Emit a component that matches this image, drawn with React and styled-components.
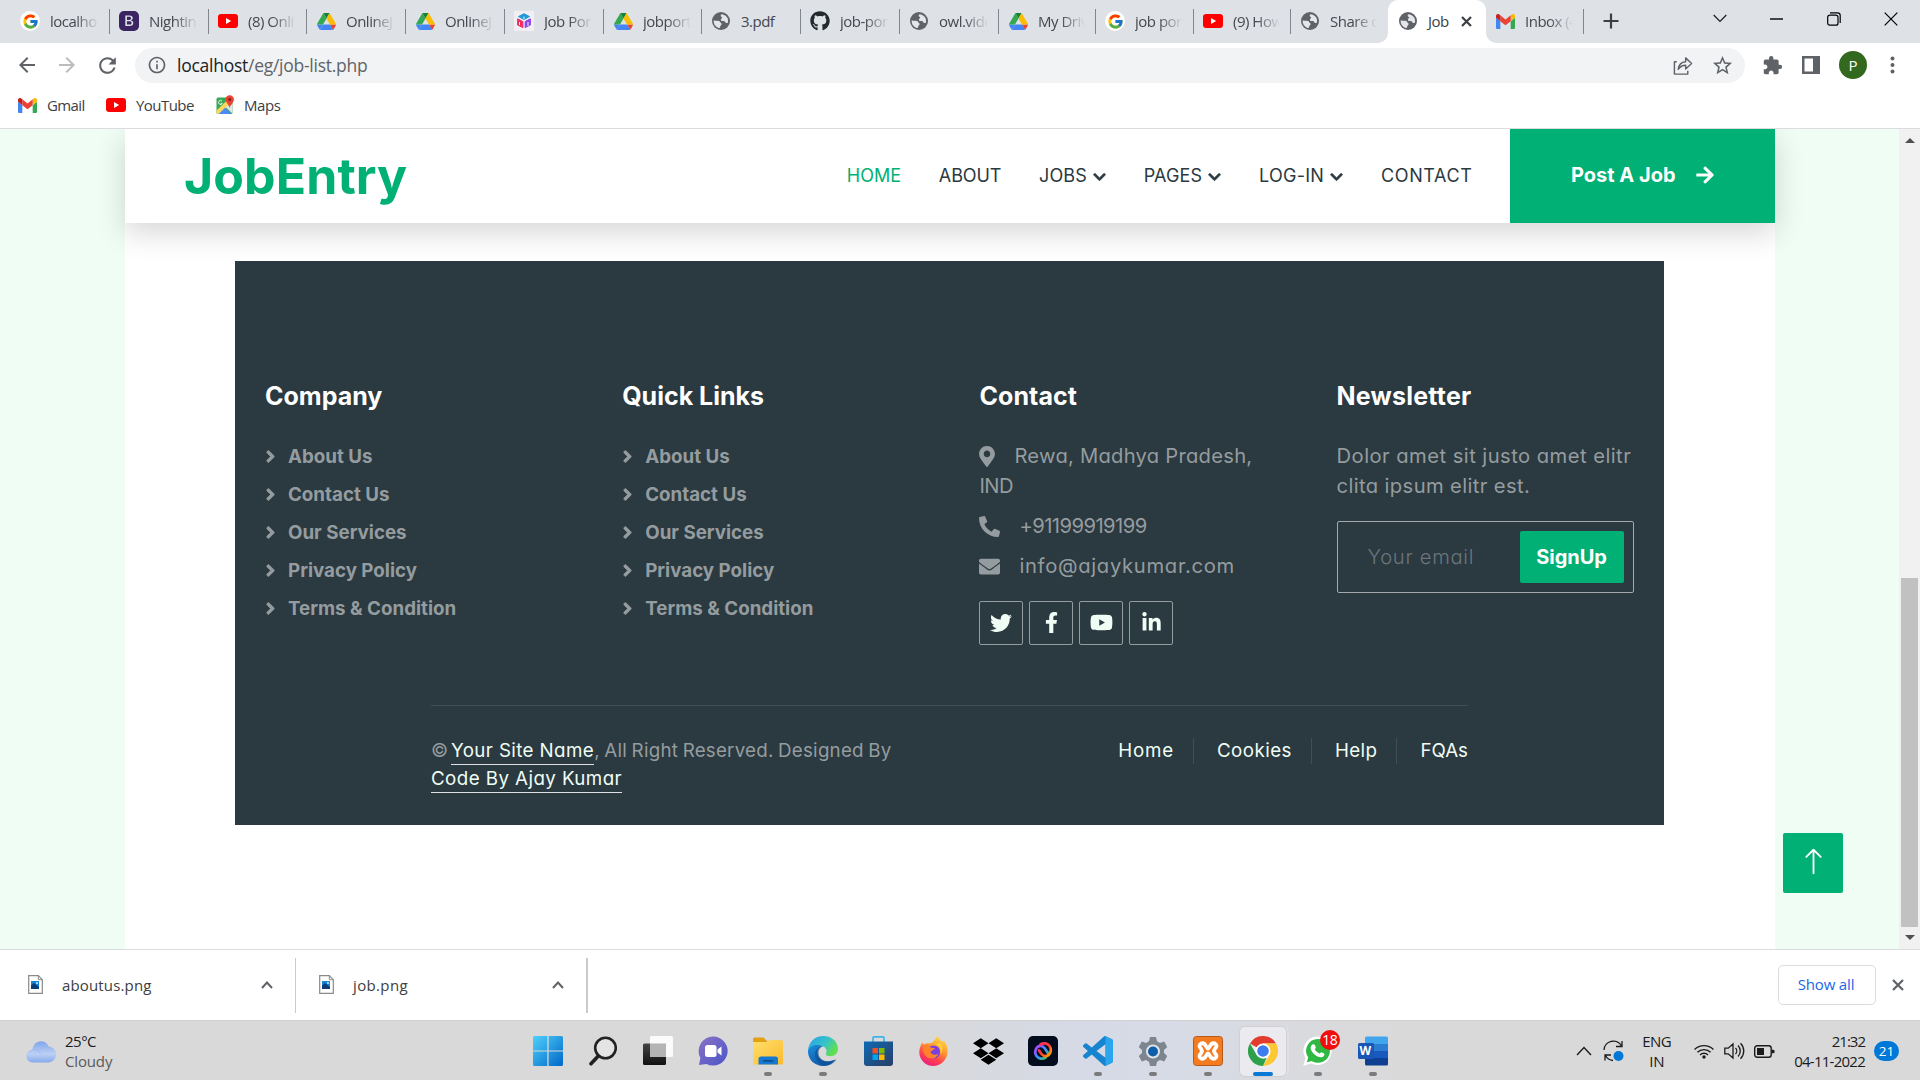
import React from "react";
import styled, { createGlobalStyle, css } from "styled-components";
import {
  FaChevronDown, FaAngleRight, FaMapMarkerAlt, FaPhoneAlt, FaEnvelope, FaTwitter,
  FaFacebookF, FaYoutube, FaLinkedinIn, FaArrowRight, FaGithub, FaDropbox,
} from "react-icons/fa";
import { FcGoogle } from "react-icons/fc";
import { BsArrowUp, BsBootstrapFill } from "react-icons/bs";
import { MdExtension, MdOutlineInfo, MdStarOutline, MdRefresh, MdArrowBack, MdArrowForward } from "react-icons/md";

const GREEN = "#00b074";
const MINT = "#effdf5";
const DARK = "#2b3940";

const GlobalStyle = createGlobalStyle`
  * { box-sizing: border-box; }
  html, body { margin: 0; padding: 0; overflow: hidden; }
  svg { display: block; flex: none; }
`;

const ui = css`font-family: "Open Sans", "Noto Sans", sans-serif;`;
const heading = css`font-family: "Inter", sans-serif; font-weight: 700;`;
const body = css`font-family: "Inter", sans-serif; font-feature-settings: "cv11"; font-weight: 400;`;

const Screen = styled.div`
  width: 1920px; height: 1080px; display: flex; flex-direction: column;
  background: #fff; overflow: hidden; ${ui}
`;
const T = styled.span`
  letter-spacing: ${p => p.$ls || 0}px;
  word-spacing: ${p => p.$ws || 0}px;
  white-space: pre;
`;

/* ---------- browser chrome ---------- */
const TabStrip = styled.div`
  flex: none; height: 43px; background: #dee1e6; display: flex; padding: 0 1px 0 11px;
`;
const Tab = styled.div`
  position: relative; flex: none; width: ${p => p.$w}px; height: 43px; display: flex; align-items: center;
  padding: 0 11px 1px 9px; gap: 10px; font-size: 15px; color: #45484d;
  ${p => p.$active && css`
    background: #fff; border-radius: 10px 10px 0 0; color: #3c4043; padding-left: 10px; padding-right: 14px;
    &::before, &::after {
      content: ""; position: absolute; bottom: 0; width: 10px; height: 10px;
    }
    &::before { left: -10px; background: radial-gradient(circle at 0 0, transparent 9.5px, #fff 10px); }
    &::after { right: -10px; background: radial-gradient(circle at 100% 0, transparent 9.5px, #fff 10px); }
  `}
`;
const TabRule = styled.i`
  position: absolute; right: 0; top: 9px; width: 1px; height: 25px; background: #80868b;
`;
const TabIcon = styled.span`
  flex: none; width: 20px; height: 20px; display: flex; align-items: center; justify-content: center;
`;
const GoogleDisc = styled(TabIcon)`background: #fff; border-radius: 50%;`;
const TabTitle = styled.span`
  flex: 1; min-width: 0; white-space: nowrap; letter-spacing: -0.5px; line-height: 24px;
  ${p => p.$fade && css`mask-image: linear-gradient(90deg, #000 calc(100% - 24px), transparent);`}
`;
const NewTab = styled.div`width: 54px; height: 42px; display: flex; align-items: center; justify-content: center;`;
const WindowControls = styled.div`margin-left: auto; display: flex;`;
const WindowButton = styled.div`
  width: 57px; height: 37px; display: flex; align-items: center; justify-content: center;
`;

const Toolbar = styled.div`
  flex: none; height: 44px; padding: 0 25px 0 15px; display: flex; align-items: center;
`;
const NavIcons = styled.div`display: flex; gap: 16px; width: 120px;`;
const Omnibox = styled.div`
  flex: none; width: 1610px; height: 35px; border-radius: 18px; background: #f1f3f4; display: flex; align-items: center;
  padding: 0 11px 0 12px; color: #5f6368; font-size: 17.5px;
  svg:first-child { margin-right: 10px; }
`;
const Host = styled.span`color: #202124;`;
const OmniActions = styled.div`
  margin-left: auto; display: flex; gap: 18px; align-items: center;
  && svg { margin: 0; }
`;
const Extensions = styled.div`
  margin-left: auto; display: flex; align-items: center; gap: 19px; color: #5f6368;
`;
const Avatar = styled.span`
  width: 28px; height: 28px; border-radius: 50%; background: #33691e; color: #fff; font-size: 15px; margin-right: 4px;
  display: flex; align-items: center; justify-content: center;
`;
const Bookmarks = styled.div`
  flex: none; height: 42px; border-bottom: 1px solid #dadce0; padding: 0 0 5px 18px; display: flex; align-items: center;
  font-size: 15px; color: #3c4043;
`;
const Bookmark = styled.div`
  display: flex; align-items: center; gap: ${p => p.$gap}px; width: ${p => p.$w}px;
`;

/* ---------- page ---------- */
const Viewport = styled.div`
  flex: none; height: 820px; display: flex; background: ${MINT}; overflow: hidden;
`;
const Gutter = styled.div`width: ${p => p.$w}px; flex: none;`;
const RightGutter = styled(Gutter)`padding: 704px 0 0 8px;`;
const Container = styled.main`width: 1650px; flex: none; background: #fff;`;
const Navbar = styled.nav`
  position: relative; height: 94px; background: #fff; display: flex; align-items: center;
  box-shadow: 0 10px 28px rgba(0, 0, 0, 0.16); clip-path: inset(0 -60px -60px -60px);
`;
const Logo = styled.div`
  ${heading} color: ${GREEN}; font-size: 50px; line-height: 60px; letter-spacing: 0.1px; padding: 0 0 0 59px;
`;
const Menu = styled.div`
  ${body} margin-left: auto; display: flex; gap: 37.8px; font-size: 18px; line-height: 28px; padding: 0 37.5px 1px 0; color: ${DARK};
`;
const MenuItem = styled.a`
  display: flex; align-items: center; gap: 6px; color: ${p => (p.$active ? GREEN : DARK)}; font-weight: 440;
  svg { margin-top: 2px; width: 13px; height: 14px; stroke: currentColor; stroke-width: 22px; }
`;
const PostJob = styled.a`
  ${heading} width: 265px; height: 94px; background: ${GREEN}; color: #fff; font-size: 20px;
  display: flex; align-items: center; padding: 0 0 2px 61px; gap: 19px;
`;
const Footer = styled.footer`
  width: 1429px; height: 564px; margin: 38px 0 0 110px; background: ${DARK}; color: #959c9f; padding-top: 120px;
  display: flex; flex-direction: column;
`;
const Columns = styled.div`
  height: 324px; display: grid; grid-template-columns: repeat(4, 357.2px);
`;
const Column = styled.section`padding: 0 30px; display: flex; flex-direction: column;`;
const Title = styled.h5`
  ${heading} margin: 0 0 31px; font-size: 25px; line-height: 30px; color: #fff;
`;
const FooterLink = styled.a`
  ${heading} display: flex; align-items: center; font-size: 18.75px; line-height: 30px; margin-bottom: 8px; gap: 12px;
  svg { width: 11px; height: 19px; margin-bottom: 2px; stroke: currentColor; stroke-width: 14px; }
`;
const Para = styled.p`
  ${body} margin: 0 0 ${p => p.$mb || 10}px; font-size: 20.2px; line-height: 30px;
  ${Title} + & { margin-top: -1px; }
`;
const ContactLine = styled.span`
  display: flex; align-items: center; gap: 19px;
  svg { width: ${p => p.$icon || 21}px; height: 21px; }
`;
const Line = styled.span`display: block;`;
const Socials = styled.div`display: flex; gap: 6px; margin-top: 10px;`;
const SocialButton = styled.a`
  width: 44px; height: 44px; border: 1px solid #959c9f; border-radius: 2px; color: ${MINT};
  display: flex; align-items: center; justify-content: center; padding-bottom: 1px;
`;
const Subscribe = styled.form`
  width: 297px; height: 72px; border: 1px solid #a3a9ac; border-radius: 2px; display: flex; align-items: center;
  justify-content: space-between; padding: 0 9px 0 30px;
`;
const Placeholder = styled.span`${body} font-weight: 300; font-size: 20.2px; color: #6c757d; padding-bottom: 2px;`;
const SignUp = styled.span`
  ${heading} width: 104px; height: 52px; border-radius: 2px; background: ${GREEN}; color: #fff; font-size: 20px;
  display: flex; align-items: center; justify-content: center;
`;
const Legal = styled.div`
  ${body} width: 1037px; margin-left: 196px; border-top: 1px solid #414e54; padding-top: 31px; display: flex;
  justify-content: space-between; font-size: 18.75px; line-height: 28px;
`;
const Copyright = styled.div`display: flex; flex-direction: column; align-items: flex-start;`;
const CopyLine = styled.div`display: flex; height: 28px;`;
const SiteLink = styled.a`color: ${MINT}; height: 28px; border-bottom: 1px solid #dee2e6;`;
const LegalMenu = styled.div`display: flex;`;
const LegalLink = styled.a`
  color: ${MINT}; height: 26px; margin-top: 1px; line-height: 26px; padding-right: ${p => (p.$last ? 0 : 19)}px; margin-right: ${p => (p.$last ? 0 : 23)}px;
  border-right: ${p => (p.$last ? "0" : "1px solid #414e54")};
`;
const BackToTop = styled.a`
  width: 60px; height: 60px; border-radius: 2px; background: ${GREEN}; color: #fff; display: flex;
  align-items: center; justify-content: center; padding: 0 0 4px 0;
`;
const Scrollbar = styled.div`
  width: 21px; margin-left: auto; background: #f1f1f1; display: flex; flex-direction: column; align-items: center;
  padding: 9px 0;
`;
const Thumb = styled.div`width: 17px; height: 349px; margin-top: 435px; background: #c1c1c1;`;
const DownArrow = styled.div`margin-top: auto;`;

/* ---------- downloads ---------- */
const Downloads = styled.div`
  flex: none; height: 72px; border-top: 1px solid #dadce0; border-bottom: 1px solid #cfcfcf; background: #fff; display: flex; align-items: center;
  font-size: 15px; color: #3c4043; padding: 0 16px 1px 0;
`;
const Download = styled.div`
  width: ${p => p.$w}px; height: 55px; margin-bottom: -2px; border-right: ${p => p.$bw}px solid #cacaca; display: flex; align-items: center;
  padding: 0 ${p => p.$pr}px 2px ${p => p.$pl}px; gap: 19px;
  svg:last-child { margin-left: auto; }
`;
const ShowAll = styled.span`
  margin: 0 16px 0 auto; width: 98px; height: 40px; border: 1px solid #dadce0; border-radius: 5px; color: #1a67e8;
  display: flex; align-items: center; justify-content: center; padding: 0 2px 2px 0;
`;

/* ---------- taskbar ---------- */
const Taskbar = styled.div`
  flex: 1; display: flex; align-items: center; color: #1b1b1b; font-size: 15px; padding-bottom: 2px;
  background: linear-gradient(90deg, #d9d9d9 0, #d9d9d9 900px, #d5dae6 1080px, #d6dbe6 1160px, #dadadc 1340px, #d9d9d9 1500px);
`;
const Weather = styled.div`width: 520.5px; padding-left: 26px; display: flex; gap: 8px; align-items: center;`;
const TwoLine = styled.div`
  display: flex; flex-direction: column; line-height: 20px; align-items: ${p => p.$align || "flex-start"};
`;
const Muted = styled(T)`color: #5a5a5a;`;
const Apps = styled.div`display: flex;`;
const AppSlot = styled.div`
  position: relative; width: 55.03px; height: 60px; display: flex; align-items: center; justify-content: center;
`;
const AppTile = styled.div`
  width: 46px; height: 49px; display: flex; align-items: center; justify-content: center; border-radius: 5px;
  ${p => p.$active && css`background: #ebebef; box-shadow: 0 0 0 1px #d0d0d4, 3px 0 0 0 #dfdfe4;`}
`;
const Dot = styled.i`
  position: absolute; bottom: 5px; left: 50%; transform: translateX(-50%); height: 4px; border-radius: 2px;
  width: ${p => (p.$active ? 20 : 8)}px; background: ${p => (p.$active ? "#0a78d4" : "#7b7b7d")};
`;
const Unread = styled.span`
  position: absolute; top: 9px; left: 29px; width: 20px; height: 20px; border-radius: 50%; background: #f00d0d; color: #fff;
  font-size: 14px; line-height: 20px; text-align: center; letter-spacing: -0.5px;
`;
const Tray = styled.div`margin-left: auto; padding-right: 21px; display: flex; align-items: center;`;
const Cell = styled.div`margin-right: ${p => p.$mr}px; display: flex;`;
const Notice = styled.span`
  width: 25px; height: 20px; border-radius: 10px; background: #0078d7; color: #fff; font-size: 13.5px; line-height: 20px; text-align: center;
`;

/* ---------- drawings ---------- */
const Globe = () => (
  <svg width="20" height="20" viewBox="0 0 20 20">
    <circle cx="10" cy="10" r="9" fill="#5f6368" />
    <path fill="#e4e6ea" d="M10.8 3.2c2.6.4 5 2 6 4.6.3 1.3.3 2.6.1 3.7-.8 1-2 .7-2.6-.3-.4-1-1.4-1.2-2.5-1.1-1.2 0-2-.8-1.9-1.7.2-.9 1.3-.9 1.3-1.8-.1-.8-1.4-.8-1.5-1.9 0-.7.4-1.3 1.1-1.5z" />
    <path fill="#e4e6ea" d="M2.7 9.3c1.8.8 3.6.4 5.3.6 1.1.3 1.1 1.5 2 2 .8.5.9 1.5.1 2.1-.9.5-.6 1.5-1.2 2.5-.3.5-.8.6-1.4.4C4.3 15.7 2.4 12.8 2.7 9.3z" />
  </svg>
);
const Drive = () => (
  <svg width="19" height="17" viewBox="0 0 87.3 78">
    <path fill="#4285f4" d="m6.6 66.85 3.85 6.65c.8 1.4 1.95 2.5 3.3 3.3l13.75-23.8h-27.5c0 1.55.4 3.1 1.2 4.5z" />
    <path fill="#34a853" d="m43.65 25-13.75-23.8c-1.35.8-2.5 1.9-3.3 3.3l-25.4 44a9.06 9.06 0 0 0 -1.2 4.5h27.5z" />
    <path fill="#ea4335" d="m73.55 76.8c1.35-.8 2.5-1.9 3.3-3.3l1.6-2.75 7.65-13.25c.8-1.4 1.2-2.95 1.2-4.5h-27.502l5.852 11.5z" />
    <path fill="#188038" d="m43.65 25 13.75-23.8c-1.35-.8-2.9-1.2-4.5-1.2h-18.5c-1.6 0-3.15.45-4.5 1.2z" />
    <path fill="#4285f4" d="m59.8 53h-32.3l-13.75 23.8c1.35.8 2.9 1.2 4.5 1.2h50.8c1.6 0 3.15-.45 4.5-1.2z" />
    <path fill="#fbbc04" d="m73.4 26.5-12.7-22c-.8-1.4-1.95-2.5-3.3-3.3l-13.75 23.8 16.15 28h27.45c0-1.55-.4-3.1-1.2-4.5z" />
  </svg>
);
const Gmail = () => (
  <svg width="19" height="15" viewBox="52 42 88 66" preserveAspectRatio="none">
    <path fill="#4285f4" d="M58 108h14V74L52 59v43c0 3.32 2.69 6 6 6" />
    <path fill="#34a853" d="M120 108h14c3.32 0 6-2.69 6-6V59l-20 15" />
    <path fill="#fbbc04" d="M120 48v26l20-15v-8c0-7.42-8.47-11.65-14.4-7.2" />
    <path fill="#ea4335" d="M72 74V48l24 18 24-18v26L96 92" />
    <path fill="#c5221f" d="M52 51v8l20 15V48l-5.6-4.2c-5.94-4.45-14.4-.22-14.4 7.2" />
  </svg>
);
const YouTube = () => (
  <svg width="20" height="14" viewBox="0 0 20 14">
    <rect width="20" height="14" rx="3.2" fill="#f00" />
    <path d="M8 4l5.2 3L8 10z" fill="#fff" />
  </svg>
);
const Portal = () => (
  <svg width="20" height="20" viewBox="0 0 20 20">
    <rect width="20" height="20" fill="#f3eef3" />
    <path d="M4.5 5.5L10 2.7l5.5 2.8L10 8.6z" fill="#1b9bd8" stroke="#1b9bd8" strokeLinejoin="round" />
    <path d="M3.6 7.8l5.3 2.8v6L3.6 14z" fill="#ec2f62" stroke="#ec2f62" strokeLinejoin="round" />
    <path d="M16.4 7.8l-5.3 2.8v6l5.3-2.6z" fill="#8b46e8" stroke="#8b46e8" strokeLinejoin="round" />
    <path d="M10 5.5v3M5.5 11v3M14 11v4" stroke="#f3eef3" strokeWidth="1" />
  </svg>
);
const Maps = () => (
  <svg width="19" height="20" viewBox="0 0 19 20">
    <rect x="0.5" y="2.5" width="16" height="16.5" rx="1.5" fill="#34a853" />
    <path d="M.5 15.5L13 3.5h3.5v3.5L3.5 19H2a1.5 1.5 0 0 1-1.5-1.5z" fill="#fbd75b" />
    <path d="M2.7 19L9 12.8l6.3 6.2z" fill="#4c8bf5" />
    <path d="M9.6 12L16.5 18.8V9z" fill="#e4e6e9" />
    <path d="M6 6.1a2 2 0 1 0 .3 2.3H4.7" stroke="#fff" strokeWidth=".9" fill="none" />
    <path d="M13.7.3a4.2 4.2 0 0 1 4.2 4.2c0 3.2-3.4 4.4-4.2 8.8-.8-4.4-4.2-5.6-4.2-8.8A4.2 4.2 0 0 1 13.7.3z" fill="#ea4335" />
    <circle cx="13.7" cy="4.5" r="1.5" fill="#8b1a12" />
  </svg>
);
const Lines = ({ w, h, d, sw = 1.3, color = "#1b1b1b" }) => (
  <svg width={w} height={h} viewBox={`0 0 ${w} ${h}`} fill="none" stroke={color} strokeWidth={sw}><path d={d} /></svg>
);
const Share = () => (
  <svg width="20" height="21" viewBox="0 0 20 22" fill="none" stroke="#5f6368" strokeWidth="1.5" strokeLinejoin="round">
    <path d="M3.5 7H1v13h14v-3.5" /><path d="M5 15c.6-5 3.5-7.6 7.8-7.9V3l6.2 6-6.2 5.6v-3.9C9.4 10.7 7 12 5 15z" />
  </svg>
);
const SidePanel = () => (
  <svg width="18" height="18" viewBox="0 0 18 18"><path fill="#5f6368" fillRule="evenodd" d="M0 0h18v18H0zM2.5 2.5v13H11v-13z" /></svg>
);
const Kebab = () => (
  <svg width="5" height="18" viewBox="0 0 5 18" fill="#5f6368"><circle cx="2.5" cy="2.5" r="2" /><circle cx="2.5" cy="9" r="2" /><circle cx="2.5" cy="15.5" r="2" /></svg>
);
const FileIcon = () => (
  <svg width="15" height="19" viewBox="0 0 15 19">
    <path d="M.7.7h9.6l4 4v13.6H.7z" fill="#fff" stroke="#8a8a8a" strokeWidth="1.2" /><path d="M10.3.7v4h4" fill="none" stroke="#8a8a8a" />
    <rect x="3" y="6" width="8" height="8" fill="#1685d8" /><path d="M3 14v-3.5l3-2.5 5 4v2z" fill="#0c3c78" /><circle cx="9" cy="8" r="1" fill="#cdeefe" />
  </svg>
);
const Cloud = () => (
  <svg width="31" height="24" viewBox="0 0 31 24">
    <defs><linearGradient id="cl" x2="0" y2="1"><stop stopColor="#7fa4ea" /><stop offset=".6" stopColor="#bcd0f4" /><stop offset="1" stopColor="#86a9ec" /></linearGradient></defs>
    <path d="M7 23.5a6.4 6.4 0 0 1-.5-12.9 8.5 8.5 0 0 1 16.3-3.2 8.1 8.1 0 0 1 .3 16.1z" fill="url(#cl)" />
    <path d="M6.5 10.6c3.5-.6 6.5 1 8 4" stroke="#9fb9ef" fill="none" />
  </svg>
);

const Windows = () => (
  <svg width="30" height="30" viewBox="0 0 30 30">
    <defs><linearGradient id="wn" x2="1" y2="1"><stop stopColor="#4fd0fb" /><stop offset="1" stopColor="#0067c8" /></linearGradient></defs>
    <path fill="url(#wn)" d="M1.5 0h12.8v14.4H0V1.5A1.5 1.5 0 0 1 1.5 0zM15.6 0h12.9A1.5 1.5 0 0 1 30 1.5v12.9H15.6zM0 15.6h14.3V30H1.5A1.5 1.5 0 0 1 0 28.5zM15.6 15.6H30v12.9a1.5 1.5 0 0 1-1.5 1.5H15.6z" />
  </svg>
);
const Search = () => (
  <svg width="28" height="30" viewBox="0 0 28 30" fill="none" stroke="#222">
    <circle cx="16.5" cy="12" r="10.3" strokeWidth="2.6" fill="#e4e4e4" /><path d="M9.3 20L2 27.8" strokeWidth="3.6" strokeLinecap="round" />
  </svg>
);
const TaskView = () => (
  <svg width="30" height="30" viewBox="0 0 30 30">
    <defs><linearGradient id="tv" x2="0" y2="1"><stop stopColor="#444" /><stop offset="1" stopColor="#111" /></linearGradient></defs>
    <rect x="0" y="7.5" width="23" height="21.5" rx="1.5" fill="url(#tv)" /><rect x="7" y="0" width="23" height="21" rx="1.5" fill="#fbfbfb" />
    <rect x="7" y="7.5" width="16" height="13.5" fill="#b4b4b4" />
  </svg>
);
const Chat = () => (
  <svg width="30" height="30" viewBox="0 0 30 30">
    <defs><linearGradient id="ch" x2="1" y2="1"><stop stopColor="#8a72c4" /><stop offset="1" stopColor="#4a55c8" /></linearGradient></defs>
    <path d="M15 .5a14.5 14.5 0 1 1-6.5 27.4L1 29l1.4-7A14.5 14.5 0 0 1 15 .5z" fill="url(#ch)" />
    <rect x="7" y="9" width="11.5" height="12" rx="2.5" fill="#fff" /><path d="M19.5 13.5l4-3v9l-4-3z" fill="#fff" />
  </svg>
);
const Folder = () => (
  <svg width="30" height="28" viewBox="0 0 30 28">
    <defs><linearGradient id="fo" x2="1" y2="1"><stop stopColor="#ffdf6d" /><stop offset="1" stopColor="#fcba2c" /></linearGradient></defs>
    <path d="M0 2a1.5 1.5 0 0 1 1.5-1.5h9L14 4v5H0z" fill="#e2a012" /><path d="M0 5h14l2-2h12.5A1.5 1.5 0 0 1 30 4.5V26a1.5 1.5 0 0 1-1.5 1.5h-27A1.5 1.5 0 0 1 0 26z" fill="url(#fo)" />
    <path d="M5.5 27.5V22A2.5 2.5 0 0 1 8 19.5h14.5A2.5 2.5 0 0 1 25 22v5.5z" fill="#1679cf" /><rect x="10" y="23" width="10.5" height="1.8" rx=".9" fill="#0b4f91" />
  </svg>
);
const Edge = () => (
  <svg width="30" height="30" viewBox="0 0 30 30">
    <defs>
      <linearGradient id="e1" x2="1" y2=".5"><stop stopColor="#2b9fe6" /><stop offset=".6" stopColor="#34c3c9" /><stop offset="1" stopColor="#62df4f" /></linearGradient>
      <linearGradient id="e2" x2=".7" y2="1"><stop stopColor="#1a8ddb" /><stop offset="1" stopColor="#0f539f" /></linearGradient>
    </defs>
    <path d="M0 14.5C.6 6 7 0 15.3 0 24 0 30 6 30 12.8c0 4.5-3.4 7.4-7.6 7.4-3.6 0-5-1.4-4.4-2.5 1.8-3.5-.5-8-6.5-8C6 9.7 2 11.5 0 14.5z" fill="url(#e1)" />
    <path d="M0 14.5C2.3 9 10.5 7.6 14.8 10.6 9.5 11 8 17 11 21.5c3 4.4 9.5 5.3 16 2.3C24 28 20 30 15.3 30 6 30-.5 23 0 14.5z" fill="url(#e2)" />
    <path d="M14.8 10.6c-4 .7-5.5 6.2-3.2 10.4 3 5.2 10.5 5 15.4 2.6.6-.3 1.2.4.8 1C24.5 28.5 20 30.2 16 30 8 27 5 19 8.500 13.5c1.5-2.3 4-3.3 6.3-2.9z" fill="#0e4f97" opacity=".65" />
  </svg>
);
const Store = () => (
  <svg width="29" height="30" viewBox="0 0 29 30">
    <defs><linearGradient id="st" x2="1" y2="1"><stop stopColor="#0f6ab4" /><stop offset="1" stopColor="#283e66" /></linearGradient></defs>
    <path d="M9 6V2a1.2 1.2 0 0 1 1.2-1.2h8.6A1.2 1.2 0 0 1 20 2v4" fill="none" stroke="#3db4ef" strokeWidth="1.7" />
    <path d="M0 5.5h29V27a3 3 0 0 1-3 3H3a3 3 0 0 1-3-3z" fill="url(#st)" />
    <path d="M8.5 12h5.5v5.5H8.5z" fill="#f25022" /><path d="M15 12h5.5v5.5H15z" fill="#7fba00" /><path d="M8.5 18.5h5.5V24H8.5z" fill="#00a4ef" /><path d="M15 18.5h5.5V24H15z" fill="#ffb900" />
  </svg>
);
const Firefox = () => (
  <svg width="29" height="30" viewBox="0 0 29 30">
    <defs><linearGradient id="ff" x1=".8" y1="0" x2=".3" y2="1"><stop stopColor="#ffe14a" /><stop offset=".4" stopColor="#ff9a2e" /><stop offset=".75" stopColor="#ff3d52" /><stop offset="1" stopColor="#e81f7f" /></linearGradient></defs>
    <path d="M17.5 0c3 1.8 4.3 4 4.7 6 1.5-.2 2-1 2.3-1.8C27.5 7.5 29 11.5 28.5 16.5 27.8 24.5 21.5 30 14.3 30 6.5 30 .5 24 .3 16.5.2 12.5 1.5 9 3.8 6.2L4.500 9C5.5 8 7 7.4 8.6 7.2 10.5 7.5 13 7 14 5.8 15.5 4 17.5 3 17.5 0z" fill="url(#ff)" />
    <circle cx="14.5" cy="16" r="6.6" fill="#7a3fe0" />
    <path d="M4.5 9c3-1.5 6 0 7 2.5 1.5.4 3.5.3 4.5 1-1 1.8-3.5 1.8-4.5 3.5 1 3 5 3.5 8 1.5-1.5 4.5-7 6.5-11 4C4 18.5 3.5 13 4.5 9z" fill="#ff8427" />
    <path d="M17 8.5c4.5 1.5 5.5 6.5 4 10 3-2 4-8 0-12z" fill="#ffce3c" />
  </svg>
);
const CreativeCloud = () => (
  <svg width="30" height="30" viewBox="0 0 30 30" fill="none" strokeWidth="2.8" strokeLinecap="round">
    <defs>
      <linearGradient id="c1" x2="1" y2="1"><stop stopColor="#ff2d6a" /><stop offset=".5" stopColor="#ff3b30" /><stop offset="1" stopColor="#ffb400" /></linearGradient>
      <linearGradient id="c2" x2="1" y2="1"><stop stopColor="#c23bff" /><stop offset=".5" stopColor="#3d8bff" /><stop offset="1" stopColor="#39d353" /></linearGradient>
    </defs>
    <rect width="30" height="30" rx="5" fill="#020c1c" stroke="none" />
    <path d="M17.5 21.5a6.5 6.5 0 0 1-9-1.5 6.6 6.6 0 0 1 1-9c2.500-1.8 5.500-1 7 1l3.500 5" stroke="url(#c2)" />
    <path d="M12.500 8.500a6.500 6.500 0 0 1 9 1.500 6.600 6.600 0 0 1-1 9c-2.500 1.800-5.500 1-7-1l-2.500-3.500" stroke="url(#c1)" />
  </svg>
);
const VSCode = () => (
  <svg width="30" height="30" viewBox="0 0 24 24">
    <path fill="#1684cf" d="M23.15 2.587L18.21.21a1.494 1.494 0 0 0-1.705.29l-9.46 8.63-4.12-3.128a.999.999 0 0 0-1.276.057L.327 7.261A1 1 0 0 0 .326 8.74L3.899 12 .326 15.26a1 1 0 0 0 .001 1.479L1.65 17.94a.999.999 0 0 0 1.276.057l4.12-3.128 9.46 8.63a1.492 1.492 0 0 0 1.704.29l4.942-2.377A1.5 1.5 0 0 0 24 20.06V3.939a1.5 1.5 0 0 0-.85-1.352zm-5.146 14.861L10.826 12l7.178-5.448v10.896z" />
    <path fill="#2aa5ee" d="M18 .3l5.15 2.287A1.5 1.5 0 0 1 24 3.939V20.06a1.5 1.5 0 0 1-.85 1.35L18 23.8z" />
  </svg>
);
const Gear = () => (
  <svg width="30" height="30" viewBox="0 0 30 30">
    <path d="M12 1h6l1 4.2 3 1.7 4.2-1.3 3 5.3-3.2 3v3.2l3.2 3-3 5.3-4.2-1.3-3 1.7L18 30h-6l-1-4.2-3-1.7-4.2 1.3-3-5.3 3.2-3v-3.2l-3.2-3 3-5.3L8 6.9l3-1.7z" fill="#7d868e" />
    <circle cx="15" cy="15.5" r="7" fill="#dfe5ea" /><circle cx="15" cy="15.5" r="5" fill="#0e5fa9" />
  </svg>
);
const Xampp = () => (
  <svg width="30" height="30" viewBox="0 0 30 30">
    <rect x=".5" y=".5" width="29" height="29" rx="3" fill="#f47b20" stroke="#b65a1b" />
    <path d="M8 7.5c5-2 5 5 7 5s2-7 7-5c4 2.5-1 5-1 7.5s5 5 1 7.5c-5 2-5-5-7-5s-2 7-7 5c-4-2.5 1-5 1-7.5s-5-5-1-7.5z" fill="none" stroke="#fff" strokeWidth="3.8" />
  </svg>
);
const Chrome = () => (
  <svg width="30" height="30" viewBox="0 0 30 30">
    <path d="M15 15L2 7.5A15 15 0 0 1 28 7.5H15z" fill="#e33b2e" /><path d="M15 15V7.5h13A15 15 0 0 1 15 30l6.5-11.2z" fill="#fcc934" />
    <path d="M2 7.5l6.5 11.3L15 22.5l3.5-.5L15 30A15 15 0 0 1 2 7.5z" fill="#2da04c" />
    <circle cx="15" cy="15" r="7.5" fill="#fff" /><circle cx="15" cy="15" r="5.8" fill="#3c7cf0" />
  </svg>
);
const WhatsApp = () => (
  <svg width="30" height="30" viewBox="0 0 30 30">
    <path d="M15 .5A14.3 14.3 0 1 1 8 27.6L.3 29.7l2.2-7.5A14.3 14.3 0 0 1 15 .5z" fill="#fff" />
    <path d="M15 3a11.9 11.9 0 1 1-6.3 22L3.8 26.3 5.2 21.6A11.9 11.9 0 0 1 15 3z" fill="#2fb944" />
    <path d="M10.2 8.3c.7-.2 1.4 0 1.6.6l1 2.3c.3.8-1 1.6-1 2.1 1 2 2.7 3.5 4.8 4.3.6 0 1.3-1.5 1.9-1.3l2.5 1.2c.7.4.5 1.5 0 2.2-1.5 2-4.2 1.8-6.4.7-3-1.5-5.2-3.7-6.5-6.5-.9-2-.2-5 2.1-5.6z" fill="#fff" />
  </svg>
);
const WordText = styled.text`font: 700 12px "Open Sans", sans-serif;`;
const Word = () => (
  <svg width="30" height="30" viewBox="0 0 30 30">
    <path d="M7 2a1.5 1.5 0 0 1 1.5-1.5h20A1.5 1.5 0 0 1 30 2v6H7z" fill="#41a5ee" /><path d="M7 8h23v7.5H7z" fill="#2b7cd3" />
    <path d="M7 15h23v7.5H7z" fill="#185abd" /><path d="M7 22h23v6a1.5 1.5 0 0 1-1.5 1.5h-20A1.5 1.5 0 0 1 7 28z" fill="#103f91" />
    <rect x="0" y="7" width="16" height="16" rx="1.5" fill="#1a56b5" /><WordText x="1.5" y="19.3" fill="#fff">W</WordText>
  </svg>
);
const Sync = () => (
  <svg width="21" height="22" viewBox="0 0 21 22" fill="none" stroke="#1b1b1b" strokeWidth="1.3">
    <path d="M1 10A9.3 9.3 0 0 1 18.5 6M19 1v5.5h-6M2 20.5V15h6M2.5 15.5A9.3 9.3 0 0 0 10 20.5" /><circle cx="15.5" cy="16" r="5" fill="#0078d7" stroke="none" />
  </svg>
);
const Wifi = () => (
  <svg width="20" height="15" viewBox="0 0 20 15" fill="none" stroke="#1b1b1b" strokeWidth="1.4">
    <path d="M.6 5.6a13.2 13.2 0 0 1 18.8 0M3.4 8.3a9.4 9.4 0 0 1 13.2 0M6 10.9a5.7 5.7 0 0 1 8 0" /><circle cx="10" cy="13" r="1.7" fill="#1b1b1b" stroke="none" />
  </svg>
);
const Volume = () => (
  <svg width="21" height="18" viewBox="0 0 21 18" fill="none" stroke="#1b1b1b" strokeWidth="1.3">
    <path d="M.8 6.2h3.4L9 2v14l-4.8-4.2H.8zM11.5 6a4.3 4.3 0 0 1 0 6M14 3.5a7.8 7.8 0 0 1 0 11M16.5 1.2a11 11 0 0 1 0 15.6" />
  </svg>
);
const Battery = () => (
  <svg width="21" height="13" viewBox="0 0 21 13"><rect x=".7" y=".7" width="16.5" height="11.6" rx="2.5" fill="none" stroke="#1b1b1b" strokeWidth="1.4" /><rect x="3" y="3" width="7" height="7" fill="#1b1b1b" /><path d="M18 4.5l2.5.8v2.4l-2.5.8z" fill="#1b1b1b" /></svg>
);

/* ---------- data ---------- */
const google = <GoogleDisc><FcGoogle size={17} /></GoogleDisc>;
const tabs = [
  [99, google, "localho"], [99, <BsBootstrapFill size={20} color="#3b2462" />, "Nightin"], [98, <YouTube />, "(8) Onli"],
  [99, <Drive />, "OnlineJ"], [99, <Drive />, "OnlineJ"], [99, <Portal />, "Job Por"], [98, <Drive />, "jobport"],
  [99, <Globe />, "3.pdf", 0, true], [99, <FaGithub size={20} color="#24292e" />, "job-por"], [99, <Globe />, "owl.vide"],
  [97, <Drive />, "My Driv"], [98, google, "job por"], [97, <YouTube />, "(9) How"], [97, <Globe />, "Share o"],
  [98, <Globe />, "Job", 1], [98, <Gmail />, "Inbox (4"],
];
const links = ["About Us", "Contact Us", "Our Services", "Privacy Policy", "Terms & Condition"];
const menu = [["HOME", 0], ["ABOUT", -0.1], ["JOBS", 0.1, 1], ["PAGES", 0.15, 1], ["LOG-IN", 0.28, 1], ["CONTACT", 0.62]];
const apps = [
  [<Windows />], [<Search />], [<TaskView />], [<Chat />], [<Folder />, 1], [<Edge />, 1], [<Store />], [<Firefox />],
  [<FaDropbox size={31} color="#000" />], [<CreativeCloud />], [<VSCode />, 1], [<Gear />, 1], [<Xampp />, 1], [<Chrome />, 2], [<WhatsApp />, 1, "18"], [<Word />, 1],
];
const socials = [<FaTwitter size={22} />, <FaFacebookF size={21} />, <FaYoutube size={23} />, <FaLinkedinIn size={21} />];

const Links = ({ title }) => (
  <Column>
    <Title>{title}</Title>
    {links.map(l => <FooterLink key={l}><FaAngleRight /><T>{l}</T></FooterLink>)}
  </Column>
);

export default function App() {
  return (
    <Screen>
      <GlobalStyle />
      <TabStrip>
        {tabs.map(([w, icon, title, active, whole], i) => (
          <Tab key={i} $w={w} $active={active}>
            <TabIcon>{icon}</TabIcon>
            <TabTitle $fade={!active && !whole}>{title}</TabTitle>
            {active ? <Lines w={11} h={11} d="M1 1l9 9M10 1l-9 9" sw={2.2} color="#3c4043" /> : null}
            {!active && i !== 13 ? <TabRule /> : null}
          </Tab>
        ))}
        <NewTab><Lines w={16} h={16} d="M8 .5v15M.5 8h15" sw={2.2} color="#3c4043" /></NewTab>
        <WindowControls>
          <WindowButton><Lines w={14} h={9} d="M.7 1L7 7.5 13.3 1" sw={1.2} /></WindowButton>
          <WindowButton><Lines w={13} h={2} d="M0 1h13" sw={1.4} color="#000" /></WindowButton>
          <WindowButton><Lines w={14} h={14} d="M2.5 3.2h6.5a2 2 0 0 1 2 2v6a2 2 0 0 1-2 2H2.7a2 2 0 0 1-2-2v-6a2 2 0 0 1 2-2zM3 .8h7.5a2.7 2.7 0 0 1 2.7 2.7V11" sw={1.2} color="#000" /></WindowButton>
          <WindowButton><Lines w={14} h={14} d="M.7.7l12.6 12.6M13.3.7L.7 13.3" sw={1.2} color="#000" /></WindowButton>
        </WindowControls>
      </TabStrip>
      <Toolbar>
        <NavIcons>
          <MdArrowBack size={24} color="#5f6368" /><MdArrowForward size={24} color="#babcbe" /><MdRefresh size={25} color="#5f6368" />
        </NavIcons>
        <Omnibox>
          <MdOutlineInfo size={20} />
          <T $ls={-0.26}><Host>localhost</Host>/eg/job-list.php</T>
          <OmniActions><Share /><MdStarOutline size={23} /></OmniActions>
        </Omnibox>
        <Extensions><MdExtension size={21} /><SidePanel /><Avatar>P</Avatar><Kebab /></Extensions>
      </Toolbar>
      <Bookmarks>
        <Bookmark $w={88} $gap={10}><Gmail /><T $ls={-0.6}>Gmail</T></Bookmark>
        <Bookmark $w={110} $gap={10}><YouTube /><T $ls={-0.55}>YouTube</T></Bookmark>
        <Bookmark $w={80} $gap={9}><Maps /><T $ls={-0.4}>Maps</T></Bookmark>
      </Bookmarks>

      <Viewport>
        <Gutter $w={125} />
        <Container>
          <Navbar>
            <Logo>JobEntry</Logo>
            <Menu>
              {menu.map(([m, ls, drop], i) => (
                <MenuItem key={m} $active={i === 0}><T $ls={ls}>{m}</T>{drop ? <FaChevronDown /> : null}</MenuItem>
              ))}
            </Menu>
            <PostJob>Post A Job<FaArrowRight size={20} /></PostJob>
          </Navbar>
          <Footer>
            <Columns>
              <Links title="Company" />
              <Links title="Quick Links" />
              <Column>
                <Title><T $ls={0.1}>Contact</T></Title>
                <Para>
                  <ContactLine $icon={16}><FaMapMarkerAlt /><T $ls={0.25}>Rewa, Madhya Pradesh,</T></ContactLine>
                  <Line><T $ls={-0.5}>IND</T></Line>
                </Para>
                <Para><ContactLine><FaPhoneAlt /><T $ls={-0.55}>+91199919199</T></ContactLine></Para>
                <Para><ContactLine><FaEnvelope /><T $ls={0.7}>info@ajaykumar.com</T></ContactLine></Para>
                <Socials>{socials.map((s, i) => <SocialButton key={i}>{s}</SocialButton>)}</Socials>
              </Column>
              <Column>
                <Title><T $ls={0.2}>Newsletter</T></Title>
                <Para $mb={20}>
                  <Line><T $ls={0.46}>Dolor amet sit justo amet elitr</T></Line>
                  <Line><T $ls={0.38}>clita ipsum elitr est.</T></Line>
                </Para>
                <Subscribe>
                  <Placeholder><T $ls={0.7}>Your email</T></Placeholder>
                  <SignUp>SignUp</SignUp>
                </Subscribe>
              </Column>
            </Columns>
            <Legal>
              <Copyright>
                <CopyLine><T $ls={-1.2}>© </T><SiteLink><T $ls={0.39}>Your Site Name</T></SiteLink><T $ls={0.22} $ws={-0.9}>, All Right Reserved. Designed By</T></CopyLine>
                <CopyLine><SiteLink><T $ls={0.42}>Code By Ajay Kumar</T></SiteLink></CopyLine>
              </Copyright>
              <LegalMenu>
                <LegalLink><T $ls={0.8}>Home</T></LegalLink>
                <LegalLink><T $ls={0.45}>Cookies</T></LegalLink>
                <LegalLink><T $ls={0.4}>Help</T></LegalLink>
                <LegalLink $last><T $ls={0}>FQAs</T></LegalLink>
              </LegalMenu>
            </Legal>
          </Footer>
        </Container>
        <RightGutter $w={124}><BackToTop><BsArrowUp size={29} /></BackToTop></RightGutter>
        <Scrollbar>
          <svg width="10" height="5" viewBox="0 0 10 5"><path d="M5 0l5 5H0z" fill="#505050" /></svg>
          <Thumb />
          <DownArrow><svg width="10" height="5" viewBox="0 0 10 5"><path d="M5 5L0 0h10z" fill="#505050" /></svg></DownArrow>
        </Scrollbar>
      </Viewport>

      <Downloads>
        <Download $w={296} $bw={1} $pl={28} $pr={22}><FileIcon /><T $ls={0.15}>aboutus.png</T><Lines w={12} h={8} d="M1 7l5-5.5L11 7" sw={2} color="#5f6368" /></Download>
        <Download $w={292} $bw={2} $pl={23} $pr={22}><FileIcon /><T $ls={0.36}>job.png</T><Lines w={12} h={8} d="M1 7l5-5.5L11 7" sw={2} color="#5f6368" /></Download>
        <ShowAll><T $ls={-0.15}>Show all</T></ShowAll>
        <Lines w={12} h={12} d="M1 1l10 10M11 1l-10 10" sw={2.2} color="#5f6368" />
      </Downloads>

      <Taskbar>
        <Weather><Cloud /><TwoLine><T $ls={-0.5}>25°C</T><Muted $ls={-0.15}>Cloudy</Muted></TwoLine></Weather>
        <Apps>
          {apps.map(([icon, state, badge], i) => (
            <AppSlot key={i}><AppTile $active={state === 2}>{icon}</AppTile>{state ? <Dot $active={state === 2} /> : null}{badge ? <Unread>{badge}</Unread> : null}</AppSlot>
          ))}
        </Apps>
        <Tray>
          <Cell $mr={11}><Lines w={16} h={10} d="M1 9l7-7.5L15 9" sw={1.4} /></Cell>
          <Cell $mr={18}><Sync /></Cell>
          <Cell $mr={23}><TwoLine $align="center"><T $ls={-0.5}>ENG</T><T $ls={-0.2}>IN</T></TwoLine></Cell>
          <Cell $mr={10}><Wifi /></Cell>
          <Cell $mr={9}><Volume /></Cell>
          <Cell $mr={19}><Battery /></Cell>
          <Cell $mr={9}><TwoLine $align="flex-end"><T $ls={-1}>21:32</T><T $ls={-0.75}>04-11-2022</T></TwoLine></Cell>
          <Notice>21</Notice>
        </Tray>
      </Taskbar>
    </Screen>
  );
}
